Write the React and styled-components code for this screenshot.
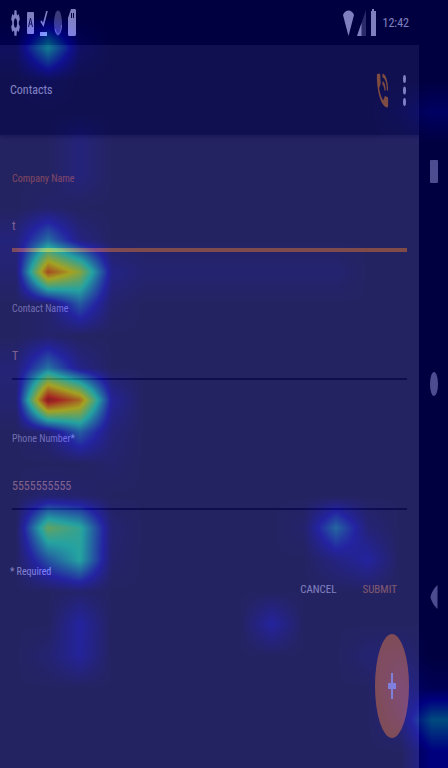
import React, { useEffect, useRef } from "react";
import styled, { createGlobalStyle } from "styled-components";
import { MdSettings, MdPhoneInTalk } from "react-icons/md";

const GlobalStyle = createGlobalStyle`
  * { box-sizing: border-box; }
  body {
    margin: 0;
    background: #000;
    font-family: "Roboto Condensed", "Liberation Sans Narrow", Roboto, sans-serif;
    color: #fff;
  }
  button, input { font-family: inherit; border: 0; padding: 0; background: none; }
`;

const Screen = styled.div`
  position: relative;
  display: flex;
  min-height: 100vh;
  overflow: hidden;
`;

const AppColumn = styled.div`
  flex: 1;
  min-width: 0;
  display: flex;
  flex-direction: column;
  background: #494644;
`;

const StatusBar = styled.div`
  display: flex;
  align-items: center;
  justify-content: space-between;
  height: 45px;
  padding: 0 10px;
  background: #000;
`;

const StatusGroup = styled.div`
  display: flex;
  align-items: center;
  gap: ${(p) => p.$gap}px;
`;

const GearIcon = styled(MdSettings)`
  width: 11px;
  height: 32px;
`;

const CallIcon = styled(MdPhoneInTalk)`
  width: 15px;
  height: 45px;
`;

const Clock = styled.time`
  margin-left: 3px;
  font-size: 12px;
  line-height: 20px;
`;

const Toolbar = styled.header`
  display: flex;
  align-items: center;
  height: 90px;
  padding: 0 4px 0 10px;
  background: #212021;
  box-shadow: 0 2px 4px rgba(0, 0, 0, 0.3);
`;

const Title = styled.h1`
  flex: 1;
  margin: 0;
  font-size: 12px;
  font-weight: 400;
  line-height: 24px;
`;

const IconButton = styled.button`
  display: grid;
  place-items: center;
  height: 48px;
  width: ${(p) => p.$width}px;
  color: ${(p) => (p.$accent ? "#ff9800" : "#fff")};
`;

const Form = styled.form`
  display: flex;
  flex-direction: column;
  padding: 29px 12px 0;
`;

const Field = styled.div`
  display: flex;
  flex-direction: column;
  height: 130px;
`;

const Label = styled.label`
  font-size: 10px;
  line-height: 30px;
  color: ${(p) => (p.$active ? "#ff9040" : "#dedada")};
`;

const Input = styled.input`
  && {
    width: 100%;
    height: ${(p) => (p.$active ? 58 : 56)}px;
    padding-top: 10px;
    font-size: 12px;
    color: #ffc48e;
    outline: none;
    border-bottom: ${(p) => (p.$active ? "4px solid #ff9410" : "2px solid #1c1a1c")};
  }
`;

const Footer = styled.div`
  display: flex;
  align-items: flex-start;
  justify-content: space-between;
  margin: 0 10px 0 -2px;
`;

const Note = styled.p`
  margin: 6px 0 0;
  font-size: 10px;
  line-height: 24px;
`;

const Actions = styled.div`
  display: flex;
  gap: 26px;
  margin-top: 16px;
`;

const TextButton = styled.button`
  font-size: 11px;
  line-height: 40px;
  color: ${(p) => (p.$accent ? "#ffb45c" : "#fff")};
`;

const Fab = styled.button`
  && {
    align-self: flex-end;
    display: grid;
    place-items: center;
    width: 34px;
    height: 104px;
    margin: 24px 10px 30px 0;
    border-radius: 50%;
    background: #ff9820;
  }
`;

const NavBar = styled.nav`
  flex: 0 0 29px;
  display: flex;
  flex-direction: column;
  align-items: center;
  justify-content: space-around;
  padding: 65px 0;
  background: #000;
`;

const NavButton = styled.button`
  display: grid;
  place-items: center;
  width: 29px;
  height: 48px;
  color: #9c98a0;
`;

const HeatCanvas = styled.canvas`
  position: absolute;
  inset: 0;
  width: 100%;
  height: 100%;
  opacity: 0.5;
  pointer-events: none;
`;

const COLS = 14;
const ROWS = 24;
const CELL = 32;

// [column, row, intensity]
const HEAT = [
  [1, 1, 0.34], [0, 1, 0.03], [2, 1, 0.04], [1, 2, 0.02],
  [2, 4, 0.05], [2, 5, 0.05], [1, 6, 0.02],
  [0, 7, 0.05], [1, 7, 0.27], [2, 7, 0.06],
  [0, 8, 0.03], [1, 8, 0.8], [2, 8, 0.57], [3, 8, 0.07],
  [4, 8, 0.03], [5, 8, 0.03], [6, 8, 0.03], [7, 8, 0.03], [8, 8, 0.03], [9, 8, 0.03], [10, 8, 0.03],
  [1, 9, 0.02], [2, 9, 0.23], [3, 9, 0.02],
  [1, 10, 0.02], [0, 11, 0.04], [1, 11, 0.28], [2, 11, 0.07],
  [0, 12, 0.03], [1, 12, 0.95], [2, 12, 0.74], [3, 12, 0.1],
  [1, 13, 0.04], [2, 13, 0.24], [3, 13, 0.04], [3, 14, 0.02],
  [1, 15, 0.03], [2, 15, 0.02],
  [1, 16, 0.5], [2, 16, 0.4], [3, 16, 0.03],
  [1, 17, 0.22], [2, 17, 0.38], [3, 17, 0.02],
  [2, 18, 0.02], [2, 19, 0.12], [2, 20, 0.11], [1, 20, 0.03],
  [10, 16, 0.26], [9, 16, 0.02], [11, 16, 0.04], [10, 17, 0.06], [11, 17, 0.12],
  [8, 19, 0.12], [11, 20, 0.03], [12, 20, 0.04], [12, 21, 0.08],
  [13, 3, 0.07], [12, 3, 0.02], [13, 21, 0.04],
  [13, 22, 0.27], [12, 22, 0.05], [13, 23, 0.12],
];

function HeatMap() {
  const ref = useRef(null);

  useEffect(() => {
    const ctx = ref.current.getContext("2d");
    const w = COLS * CELL;
    const h = ROWS * CELL;
    const grid = new Float32Array(COLS * ROWS);
    HEAT.forEach(([c, r, v]) => { grid[r * COLS + c] = v; });
    const at = (c, r) =>
      grid[Math.min(ROWS - 1, Math.max(0, r)) * COLS + Math.min(COLS - 1, Math.max(0, c))];
    const ramp = (v, mid) => 255 * Math.min(1, Math.max(0, 1.5 - Math.abs(4 * v - mid)));
    const image = ctx.createImageData(w, h);
    for (let y = 0; y < h; y += 1) {
      const gy = (y + 0.5) / CELL - 0.5;
      const r = Math.floor(gy);
      const ty = gy - r;
      for (let x = 0; x < w; x += 1) {
        const gx = (x + 0.5) / CELL - 0.5;
        const c = Math.floor(gx);
        const tx = gx - c;
        const top = at(c, r) * (1 - tx) + at(c + 1, r) * tx;
        const bottom = at(c, r + 1) * (1 - tx) + at(c + 1, r + 1) * tx;
        const v = top * (1 - ty) + bottom * ty;
        const i = (y * w + x) * 4;
        image.data[i] = ramp(v, 3);
        image.data[i + 1] = ramp(v, 2);
        image.data[i + 2] = ramp(v, 1);
        image.data[i + 3] = 255;
      }
    }
    ctx.putImageData(image, 0, 0);
  }, []);

  return <HeatCanvas ref={ref} width={COLS * CELL} height={ROWS * CELL} aria-hidden="true" />;
}

function FormField({ id, label, value, active, type = "text" }) {
  return (
    <Field>
      <Label htmlFor={id} $active={active}>{label}</Label>
      <Input id={id} type={type} defaultValue={value} $active={active} />
    </Field>
  );
}

export default function App() {
  return (
    <>
      <GlobalStyle />
      <Screen>
        <AppColumn>
          <StatusBar>
            <StatusGroup $gap={6}>
              <GearIcon preserveAspectRatio="none" />
              <svg width="7" height="22" viewBox="0 0 7 22">
                <rect width="7" height="22" rx="1" fill="#fff" />
                <path d="M1.5 15 3.5 6l2 9M2.300 12h2.400" stroke="#222" fill="none" />
              </svg>
              <svg width="8" height="26" viewBox="0 0 8 26">
                <path d="M1 11l2.300 4L7 1" stroke="#fff" strokeWidth="1.600" fill="none" />
                <path d="M0 22h7v4H0z" fill="#fff" />
              </svg>
              <svg width="8" height="26" viewBox="0 0 8 26">
                <ellipse cx="4" cy="13" rx="4" ry="12.500" fill="#777" />
                <path d="M1 19c1.500 7 6 7 6.500-4" stroke="#ccc" fill="none" />
              </svg>
              <svg width="8" height="27" viewBox="0 0 8 27">
                <path d="M3 0h4q1 0 1 2v23q0 2-1 2H1q-1 0-1-2V9zM3 4v5h1V4zM5 4v5h1V4z" fill="#fff" fillRule="evenodd" />
              </svg>
            </StatusGroup>
            <StatusGroup $gap={3}>
              <svg width="11" height="26" viewBox="0 0 11 26">
                <path d="M0 5C2-1 9-1 11 5L5.500 26z" fill="#fff" />
              </svg>
              <svg width="9" height="26" viewBox="0 0 9 26">
                <path d="M0 26 9 0v26z" fill="#555" />
                <path d="M0 26 4.500 13v13z" fill="#fff" />
              </svg>
              <svg width="8" height="27" viewBox="0 0 8 27">
                <path d="M3 0h2v2h2v25H2V2h1z" fill="#fff" />
              </svg>
              <Clock>12:42</Clock>
            </StatusGroup>
          </StatusBar>
          <Toolbar>
            <Title>Contacts</Title>
            <IconButton type="button" $width={22} $accent aria-label="Call">
              <CallIcon preserveAspectRatio="none" />
            </IconButton>
            <IconButton type="button" $width={22} aria-label="More options">
              <svg width="3" height="31" viewBox="0 0 3 31" fill="#fff">
                <ellipse cx="1.500" cy="4" rx="1.500" ry="4" />
                <ellipse cx="1.500" cy="15.500" rx="1.500" ry="4" />
                <ellipse cx="1.500" cy="27" rx="1.500" ry="4" />
              </svg>
            </IconButton>
          </Toolbar>
          <Form onSubmit={(e) => e.preventDefault()}>
            <FormField id="company" label="Company Name" value="t" active />
            <FormField id="contact" label="Contact Name" value="T" />
            <FormField id="phone" label="Phone Number*" value="5555555555" type="tel" />
            <Footer>
              <Note>* Required</Note>
              <Actions>
                <TextButton type="button">CANCEL</TextButton>
                <TextButton type="submit" $accent>SUBMIT</TextButton>
              </Actions>
            </Footer>
          </Form>
          <Fab type="button" aria-label="Add contact">
            <svg width="8" height="26" viewBox="0 0 8 26" fill="#fff">
              <path d="M3 0h2v10h3v6H5v10H3V16H0v-6h3z" />
            </svg>
          </Fab>
        </AppColumn>
        <NavBar>
          <NavButton type="button" aria-label="Recent apps">
            <svg width="8" height="23" viewBox="0 0 8 23"><rect width="8" height="23" rx="1" fill="currentColor" /></svg>
          </NavButton>
          <NavButton type="button" aria-label="Home">
            <svg width="8" height="24" viewBox="0 0 8 24"><ellipse cx="4" cy="12" rx="4" ry="12" fill="currentColor" /></svg>
          </NavButton>
          <NavButton type="button" aria-label="Back">
            <svg width="8" height="24" viewBox="0 0 8 24"><path d="M7.500 0v24C5 22 1 16 .5 12 1 8 5 2 7.500 0z" fill="currentColor" /></svg>
          </NavButton>
        </NavBar>
        <HeatMap />
      </Screen>
    </>
  );
}
